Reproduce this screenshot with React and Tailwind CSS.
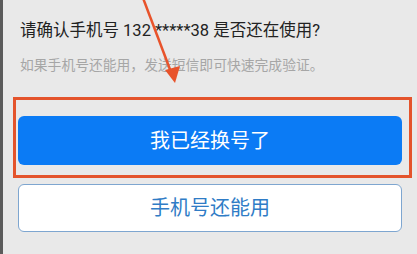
import React from 'react';

const FONT = { fontFamily: 'Roboto, "Noto Sans CJK SC", "Noto Sans", sans-serif' };

export default function App() {
    return (
        <div
            className="relative w-[417px] h-[254px] overflow-hidden bg-[#e9e9e9] border-l-[3px] border-[#5b5b5b]"
            style={FONT}
        >
            {/* Prompt */}
            <div className="pl-[17px] pt-[19px]">
                <p className="text-[16.5px] leading-[24px] text-[#222]">
                    请确认手机号 132 *****38 是否还在使用?
                </p>
                <p className="mt-[12px] text-[13.8px] leading-[20px] text-[#a6a6a6]">
                    如果手机号还能用，发送短信即可快速完成验证。
                </p>
            </div>

            {/* Highlighted primary action */}
            <div className="ml-[10px] mt-[22px] w-[399px] h-[81px] border-[3px] border-[#e4542c] pl-[2px] pt-[16px]">
                <button className="w-[384px] h-[49px] rounded-[6px] bg-[#0b7bf5] text-white text-[20px] leading-none">
                    我已经换号了
                </button>
            </div>

            <button className="ml-[15px] mt-[6px] w-[384px] h-[48px] rounded-[6px] bg-white border border-[#7ea6d0] text-[#2f7cc6] text-[20px] leading-none">
                手机号还能用
            </button>

            {/* Annotation arrow */}
            <svg className="absolute left-0 top-0" width="417" height="254" viewBox="0 0 417 254">
                <line x1="140" y1="-2" x2="168" y2="72" stroke="#e8532b" strokeWidth="2.5" />
                <polygon points="162,70 177,66 172,83" fill="#e8532b" />
            </svg>
        </div>
    );
}
